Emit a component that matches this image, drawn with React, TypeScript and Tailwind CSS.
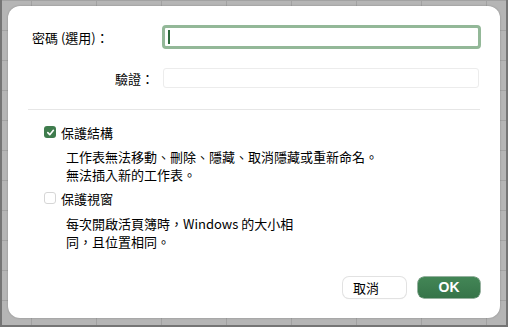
const font = 'font-["Noto_Sans_CJK_TC","Noto_Sans_CJK_SC",sans-serif]'

function CheckBox({ checked }: { checked: boolean }) {
  return checked ? (
    <span className="flex h-[12px] w-[12px] items-center justify-center rounded-[3px] bg-[#3f7c4d]">
      <svg width="9" height="9" viewBox="0 0 10 10" fill="none">
        <path d="M2 5.2 L4.2 7.4 L8.2 2.6" stroke="white" strokeWidth="1.8" strokeLinecap="round" strokeLinejoin="round" />
      </svg>
    </span>
  ) : (
    <span className="h-[12px] w-[12px] rounded-[3px] border border-[#d6d6d6] bg-white" />
  )
}

export default function App() {
  return (
    <div
      className={`h-[327px] w-[508px] overflow-hidden border-x-2 border-b-2 border-[#757575] bg-[#b5b5b5] bg-[linear-gradient(to_right,#a2a2a2_1px,transparent_1px),linear-gradient(to_bottom,#a2a2a2_1px,transparent_1px)] bg-size-[65px_30px] bg-position-[29px_0px] pl-[6px] pt-[6px] ${font}`}
    >
      <div className="flex h-[312px] w-[492px] flex-col rounded-[12px] bg-white pt-[19px] text-[13px] leading-[17px] text-black shadow-[0_0_2px_rgba(0,0,0,0.25)]">
        {/* password */}
        <div className="flex h-[24px] items-center">
          <span className="ml-[24px] w-[130px]">密碼 (選用)：</span>
          <div className="flex h-[24px] w-[319px] items-center rounded-[4px] border-[3px] border-[#93b898] pl-[3px]">
            <span className="h-[14px] w-[2px] bg-[#2f6b3e]" />
          </div>
        </div>

        {/* verify */}
        <div className="mt-[19px] flex h-[20px] items-center">
          <span className="w-[146px] text-right">驗證：</span>
          <div className="ml-[9px] h-[20px] w-[316px] rounded-[3px] border border-[#ececec] bg-white" />
        </div>

        <div className="mx-[20px] mt-[21px] h-px bg-[#e6e6e6]" />

        {/* protect structure */}
        <div className="ml-[36px] mt-[13px] flex h-[18px] items-center gap-[5px]">
          <CheckBox checked />
          <span>保護結構</span>
        </div>
        <p className="ml-[58px] mt-[7px] leading-[17.5px]">
          工作表無法移動、刪除、隱藏、取消隱藏或重新命名。
          <br />
          無法插入新的工作表。
        </p>

        {/* protect windows */}
        <div className="ml-[36px] mt-[6px] flex h-[18px] items-center gap-[5px]">
          <CheckBox checked={false} />
          <span>保護視窗</span>
        </div>
        <p className="ml-[58px] mt-[8px] leading-[17.5px]">
          每次開啟活頁簿時，Windows 的大小相
          <br />
          同，且位置相同。
        </p>

        {/* buttons */}
        <div className="mr-[20px] mt-[27px] flex justify-end gap-[12px]">
          <button className="flex h-[21px] w-[63px] items-center rounded-[6px] bg-white pl-[10px] text-[13px] shadow-[0_0_0_1px_#e2e2e2,0_1px_1px_rgba(0,0,0,0.12)]">
            取消
          </button>
          <button className="flex h-[21px] w-[62px] items-center justify-center rounded-[6px] bg-[linear-gradient(to_bottom,#438656,#367449)] font-['Liberation_Sans',sans-serif] text-[14px] font-bold text-white shadow-[0_0_0_0.5px_#2f6540]">
            OK
          </button>
        </div>
      </div>
    </div>
  )
}
